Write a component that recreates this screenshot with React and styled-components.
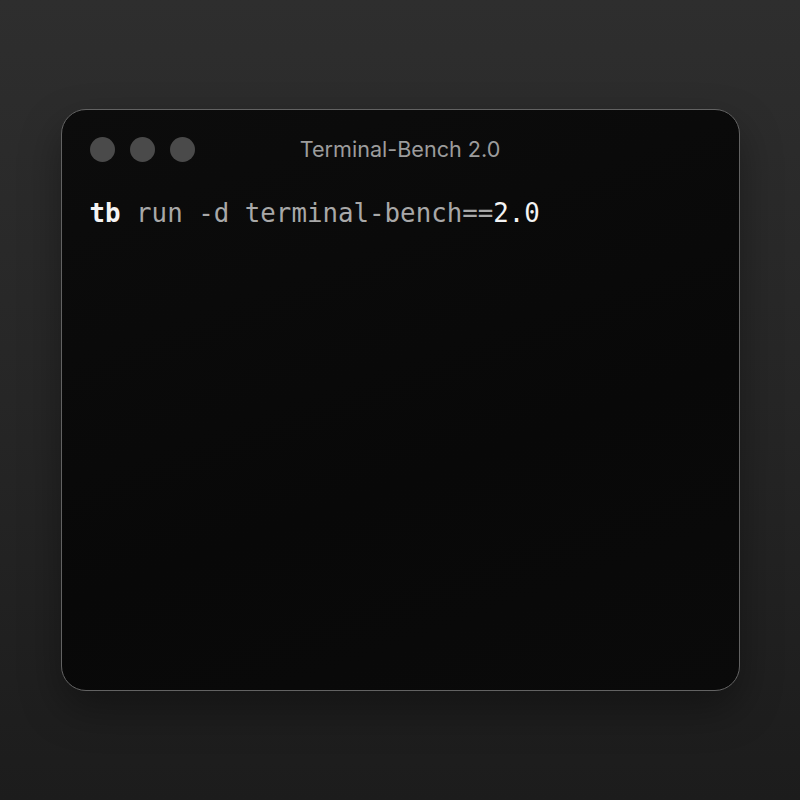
import React from "react"
import styled, { createGlobalStyle } from "styled-components"

const Global = createGlobalStyle`
  html, body {
    margin: 0;
    padding: 0;
    height: 100%;
  }
  body {
    background: linear-gradient(180deg, #2e2e2e 0%, #262626 50%, #1c1c1c 100%);
    font-family: Inter, "Noto Sans", sans-serif;
  }
`

const Stage = styled.main`
  width: 800px;
  height: 800px;
  display: flex;
  justify-content: center;
  padding-top: 109px;
  box-sizing: border-box;
`

const Window = styled.section`
  width: 679px;
  height: 582px;
  box-sizing: border-box;
  border: 1.5px solid #626262;
  border-radius: 25px;
  background: linear-gradient(160deg, #0c0c0c 0%, #080808 60%, #0a0a0a 100%);
  box-shadow: 0 18px 40px rgba(0, 0, 0, 0.35);
  display: flex;
  flex-direction: column;
`

const TitleBar = styled.header`
  position: relative;
  height: 78px;
  display: flex;
  align-items: center;
  padding: 0 28px;
  justify-content: center;
`

const Lights = styled.div`
  position: absolute;
  left: 28px;
  top: 27px;
  display: flex;
  gap: 15px;
`

const Light = styled.span`
  width: 25px;
  height: 25px;
  border-radius: 50%;
  background: #4a4a4a;
`

const Title = styled.h1`
  margin: 0;
  font-size: 21.6px;
  font-weight: 400;
  color: #9c9c9c;
`

const Body = styled.div`
  padding: 0 28px;
`

const Line = styled.pre`
  margin: 0;
  margin-top: 9px;
  font-family: "DejaVu Sans Mono", "Liberation Mono", monospace;
  font-size: 25.8px;
  line-height: 32px;
  color: #a8a8a8;
`

const Part = styled.span`
  color: ${p => (p.$bright ? "#f4f4f4" : "#a8a8a8")};
  font-weight: ${p => (p.$bold ? 700 : 400)};
`

export default function App() {
  return (
    <>
      <Global />
      <Stage>
        <Window>
          <TitleBar>
            <Lights>
              <Light />
              <Light />
              <Light />
            </Lights>
            <Title>Terminal-Bench 2.0</Title>
          </TitleBar>
          <Body>
            <Line>
              <Part $bright $bold>tb</Part> run -d terminal-bench==<Part $bright>2.0</Part>
            </Line>
          </Body>
        </Window>
      </Stage>
    </>
  )
}
